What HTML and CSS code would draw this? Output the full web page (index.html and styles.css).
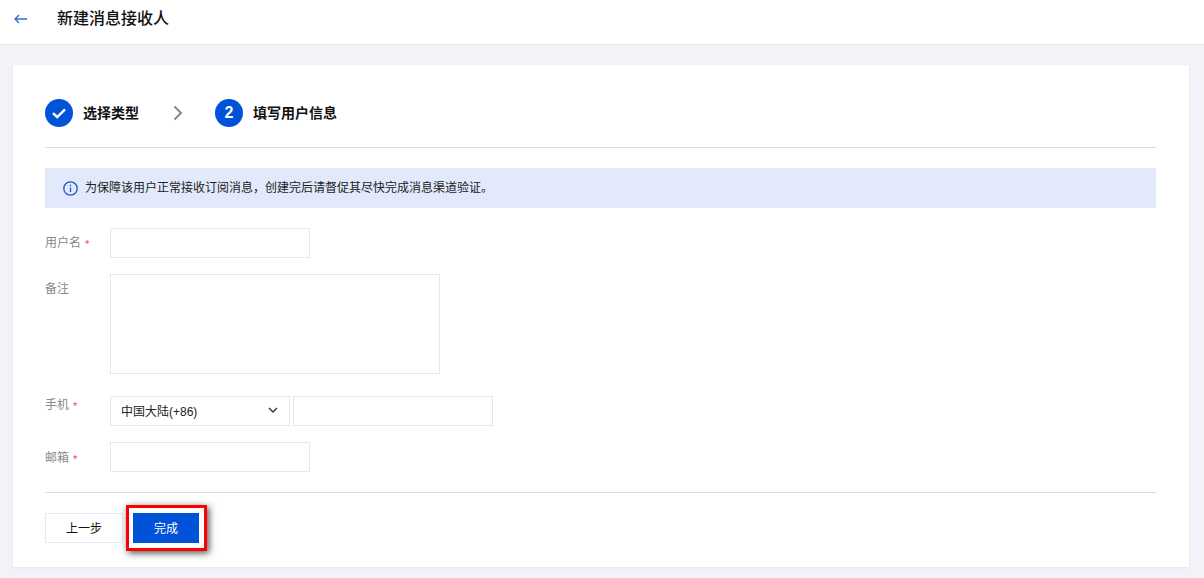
FILE: index.html
```html
<!DOCTYPE html>
<html lang="zh-CN">
<head>
<meta charset="utf-8">
<title>新建消息接收人</title>
<link rel="stylesheet" href="styles.css">
</head>
<body>
<header class="topbar">
  <svg class="back" width="16" height="16" viewBox="0 0 16 16" fill="none" stroke="#2f6fdf" stroke-width="1.4"><path d="M14 8H2M6 4 2 8l4 4"/></svg>
  <h1 class="title">新建消息接收人</h1>
</header>
<main class="page">
  <section class="card">
    <div class="steps">
      <div class="step">
        <span class="dot"><svg width="16" height="16" viewBox="0 0 16 16" fill="none" stroke="#fff" stroke-width="2.4"><path d="M2 8.200 6.200 12 14 4.400"/></svg></span>
        <span class="step-name">选择类型</span>
      </div>
      <svg class="sep" width="12" height="16" viewBox="0 0 12 16" fill="none" stroke="#888" stroke-width="2"><path d="M2.500 1.500 9 8l-6.500 6.500"/></svg>
      <div class="step">
        <span class="dot">2</span>
        <span class="step-name">填写用户信息</span>
      </div>
    </div>
    <div class="notice">
      <svg width="15" height="15" viewBox="0 0 15 15" fill="none" stroke="#1f56c9" stroke-width="1.300"><circle cx="7.500" cy="7.500" r="6.700"/><path d="M7.500 6.500v4.500M7.500 3.800v1.500"/></svg>
      <span class="notice-text">为保障该用户正常接收订阅消息，创建完后请督促其尽快完成消息渠道验证。</span>
    </div>
    <form class="form">
      <div class="row">
        <label class="label label-name">用户名<i class="req">*</i></label>
        <input class="field" type="text">
      </div>
      <div class="row">
        <label class="label">备注</label>
        <textarea class="field area"></textarea>
      </div>
      <div class="row row-phone">
        <label class="label label-phone">手机<i class="req">*</i></label>
        <div class="select">
          <span>中国大陆(+86)</span>
          <svg width="10" height="7" viewBox="0 0 10 7" fill="none" stroke="#333" stroke-width="1.400"><path d="M1 1l4 4 4-4"/></svg>
        </div>
        <input class="field" type="text">
      </div>
      <div class="row">
        <label class="label label-mail">邮箱<i class="req">*</i></label>
        <input class="field" type="text">
      </div>
    </form>
    <div class="actions">
      <button class="btn" type="button">上一步</button>
      <button class="btn primary" type="button">完成</button>
    </div>
  </section>
</main>
</body>
</html>
```

FILE: styles.css
```css
* { box-sizing: border-box; }
html, body { margin: 0; height: 100%; overflow: hidden; }
body {
  background: #f2f3f8;
  font-family: "Liberation Sans", "Noto Sans CJK SC", sans-serif;
  font-size: 12px;
  color: #000;
}
.topbar {
  height: 45px;
  background: #fff;
  border-bottom: 1px solid #e6e8f0;
  display: flex;
  align-items: flex-start;
  padding: 11px 0 0 13px;
}
.back { flex: none; }
.title {
  margin: -4px 0 0 28px;
  font-size: 16px;
  line-height: 24px;
  font-weight: 500;
  color: #111;
}
.page { padding: 20px 15px 0 13px; }
.card {
  background: #fff;
  height: 502px;
  padding: 34px 33px 0 32px;
  box-shadow: 0 1px 3px rgba(40, 50, 90, .06);
}
.steps {
  display: flex;
  align-items: center;
  height: 49px;
  padding-bottom: 21px;
  border-bottom: 1px solid #dcdcdc;
}
.step { display: flex; align-items: center; }
.dot {
  width: 28px;
  height: 28px;
  border-radius: 50%;
  background: #0052d9;
  color: #fff;
  font-size: 16px;
  font-weight: 700;
  display: flex;
  align-items: center;
  justify-content: center;
}
.step-name {
  margin-left: 10px;
  padding-bottom: 2px;
  font-size: 14px;
  font-weight: 700;
  color: #111;
}
.sep { margin: 0 31px 0 33px; flex: none; }
.notice {
  margin-top: 20px;
  height: 40px;
  background: #e1e9fb;
  padding-left: 18px;
  display: flex;
  align-items: center;
  gap: 7px;
  color: #222;
}
.notice-text { padding-bottom: 4px; }
.form { padding-top: 20px; }
.row { display: flex; align-items: flex-start; margin-bottom: 16px; }
.row-phone { margin-top: 22px; }
.label {
  width: 65px;
  flex: none;
  padding-top: 6px;
  line-height: 18px;
  color: #888;
}
.label-name { padding-top: 6px; }
.label-phone { padding-top: 0; }
.label-mail { padding-top: 7px; }
.req {
  color: #ff3b46;
  font-style: normal;
  font-size: 11px;
  margin-left: 4px;
  vertical-align: -1px;
}
.field {
  display: block;
  width: 200px;
  height: 30px;
  border: 1px solid #e5e7ef;
  background: #fff;
  padding: 0 10px;
  outline: 0;
  border-radius: 0;
  margin: 0;
}
.area { width: 330px; height: 100px; resize: none; }
.select {
  width: 180px;
  height: 30px;
  margin-right: 3px;
  border: 1px solid #e5e7ef;
  padding: 0 11px 2px 10px;
  display: flex;
  align-items: center;
  justify-content: space-between;
  color: #222;
}
.actions {
  margin-top: 20px;
  border-top: 1px solid #dcdcdc;
  padding-top: 20px;
  display: flex;
  gap: 10px;
}
.btn {
  width: 78px;
  height: 30px;
  border: 1px solid #e5e7ef;
  background: #fff;
  color: #111;
  font: inherit;
  padding: 0 0 2px;
}
.primary {
  position: relative;
  width: 66px;
  background: #0052d9;
  border-color: #0052d9;
  color: #fff;
}
.primary::before {
  content: "";
  position: absolute;
  top: -9px;
  left: -8px;
  right: -9px;
  bottom: -9px;
  border: 3px solid #f00;
  box-shadow: 2px 2px 7px rgba(0, 0, 0, .7);
}
```
